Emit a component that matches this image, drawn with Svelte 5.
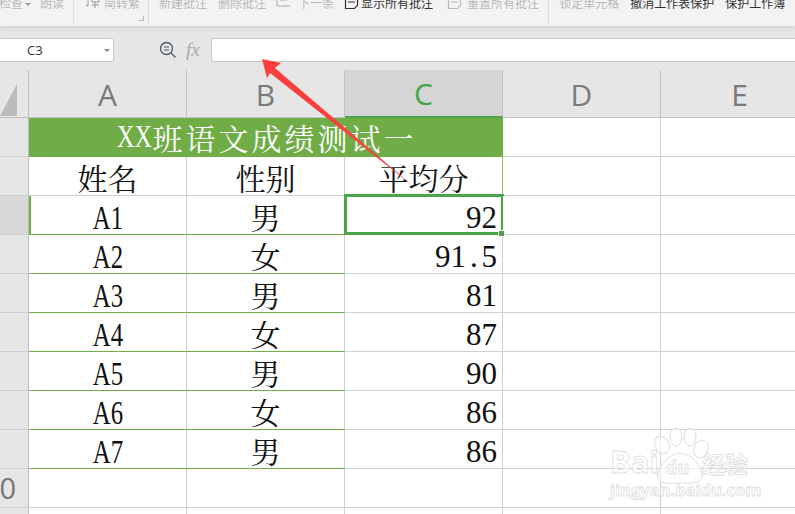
<script lang="ts">
  // spreadsheet screenshot: ribbon stub, formula bar, grade table
  const columns = ['A', 'B', 'C', 'D', 'E'];
  const students = [
    { name: 'A1', sex: '男', score: '92' },
    { name: 'A2', sex: '女', score: '91.5' },
    { name: 'A3', sex: '男', score: '81' },
    { name: 'A4', sex: '女', score: '87' },
    { name: 'A5', sex: '男', score: '90' },
    { name: 'A6', sex: '女', score: '86' },
    { name: 'A7', sex: '男', score: '86' }
  ];
</script>

<div class="page">
  <div class="ribbon">
    <div class="tools">
      <span class="tool off check">检查<i class="caret"></i></span>
      <span class="tool off read">朗读</span>
      <span class="sep one"></span>
      <svg class="ico fan" width="16" height="12" viewBox="0 0 16 12"><path d="M3 2v7l-2-1M7 0h7v5H7zM7 8h7M10 5v6" fill="none" stroke="#999"/></svg>
      <span class="tool off conv">简转繁</span>
      <span class="launcher"></span>
      <span class="sep two"></span>
      <span class="tool off new">新建批注</span>
      <span class="tool off del">删除批注</span>
      <svg class="ico next" width="15" height="12" viewBox="0 0 15 12"><path d="M1 0v9h13M4 3h7" fill="none" stroke="#aaa"/></svg>
      <span class="tool off nxt">下一条</span>
      <svg class="ico show" width="15" height="14" viewBox="0 0 15 14"><path d="M1.500 0v12.500h9l3-3V0M4 3h7M4 6h7" fill="none" stroke="#333" stroke-width="1.200"/></svg>
      <span class="tool on shw">显示所有批注</span>
      <svg class="ico reset" width="15" height="14" viewBox="0 0 15 14"><path d="M1.500 0v12.500h9l3-3V0M4 3h7M4 6h7" fill="none" stroke="#bbb" stroke-width="1.200"/></svg>
      <span class="tool off rst">重置所有批注</span>
      <span class="sep three"></span>
      <span class="tool off lock">锁定单元格</span>
      <span class="tool on undo">撤消工作表保护</span>
      <span class="tool on book">保护工作簿</span>
    </div>
  </div>

  <div class="formula-bar">
    <div class="name-box">
      <span>C3</span>
      <i class="drop"></i>
    </div>
    <svg class="lens" width="18" height="18" viewBox="0 0 18 18">
      <circle cx="7.500" cy="7.500" r="6" fill="none" stroke="#4c5a66" stroke-width="1.300"/>
      <path d="M12 12l4.500 4.500" stroke="#4c5a66" stroke-width="1.300"/>
      <path d="M5 6h5M5 9h5" stroke="#4c5a66" stroke-width="1.200"/>
    </svg>
    <span class="fx">fx</span>
    <div class="formula-input"></div>
  </div>

  <div class="sheet">
    <div class="corner"><i></i></div>
    {#each columns as col}
      <div class="col-head" class:current={col === 'C'}>{col}</div>
    {/each}

    <!-- row 1 -->
    <div class="row-head"></div>
    <div class="title"><span class="latin xx">XX</span>班语文成绩测试一</div>
    <div class="cell"></div>
    <div class="cell last"></div>

    <!-- row 2 -->
    <div class="row-head"></div>
    <div class="cell data">姓名</div>
    <div class="cell data">性别</div>
    <div class="cell data tinted">平均分</div>
    <div class="cell"></div>
    <div class="cell last"></div>

    {#each students as s, i}
      <div class="row-head" class:current={i === 0}></div>
      <div class="cell data ruled" class:first-row={i === 0}><span class="latin name">{s.name}</span></div>
      <div class="cell data ruled">{s.sex}</div>
      <div class="cell data score" class:active={i === 0}>
        <!-- half-width digits, each in its own slot -->
        {#each s.score as ch}<span class="latin digit">{ch}</span>{/each}
        {#if i === 0}<i class="handle"></i>{/if}
      </div>
      <div class="cell"></div>
      <div class="cell last"></div>
    {/each}

    <div class="row-head clipped"><span>10</span></div>
    <div class="cell"></div>
    <div class="cell"></div>
    <div class="cell"></div>
    <div class="cell"></div>
    <div class="cell last"></div>

    <div class="row-head"></div>
    <div class="cell"></div>
    <div class="cell"></div>
    <div class="cell"></div>
    <div class="cell"></div>
    <div class="cell last"></div>
  </div>

  <svg class="arrow" width="795" height="514" viewBox="0 0 795 514">
    <polygon points="262,59 281,63 275,68 413,186 270,73 267,78" fill="#fb3f3f"/>
  </svg>

  <svg class="mark" width="160" height="80" viewBox="0 0 160 80">
    <g fill="#fff" fill-opacity="0.6" stroke="#dedede" stroke-width="1">
      <ellipse cx="54" cy="18" rx="7" ry="9" transform="rotate(-30 54 18)"/>
      <ellipse cx="68" cy="10" rx="6" ry="9"/>
      <ellipse cx="82" cy="10" rx="6" ry="9"/>
      <ellipse cx="93" cy="22" rx="7" ry="9" transform="rotate(25 93 22)"/>
      <path d="M72 26c10 0 24 14 22 24-2 7-12 6-22 6s-20 2-22-5c-2-10 12-25 22-25z"/>
    </g>
    <g class="mark-text">
      <text x="2" y="46" font-size="31">Bai</text>
      <text x="58" y="47" font-size="18">du</text>
      <text x="94" y="46" font-size="23">经验</text>
      <text x="2" y="69" font-size="16.500">jingyan.baidu.com</text>
    </g>
  </svg>
</div>

<style>
  :global(body) {
    margin: 0;
  }

  .page {
    position: relative;
    width: 795px;
    height: 514px;
    overflow: hidden;
    background: #e6e6e6;
    font-family: "Noto Serif CJK SC", "Noto Sans CJK SC", sans-serif;
  }

  .ribbon {
    height: 26px;
    background: #f3f3f3;
    box-shadow: 0 2px 5px rgba(0, 0, 0, 0.09);
    overflow: hidden;
  }

  .tools {
    position: relative;
    display: flex;
    align-items: center;
    height: 12px;
    margin-top: -3px;
    font-family: "Noto Sans CJK SC", sans-serif;
    font-size: 12px;
    line-height: 12px;
    white-space: nowrap;
  }

  .tool {
    flex: none;
  }

  .tool.off {
    color: #b9b9b9;
  }

  .tool.on {
    color: #333;
  }

  .check { margin-left: -1px; }
  .caret {
    display: inline-block;
    margin-left: 2px;
    vertical-align: 2px;
    border: 3px solid transparent;
    border-top: 3px solid #999;
    border-bottom: 0;
  }
  .read { margin-left: 9px; }
  .fan { margin-left: 21px; }
  .conv { margin-left: 3px; }
  .new { margin-left: 19px; }
  .del { margin-left: 11px; }
  .next { margin-left: 10px; }
  .nxt { margin-left: 7px; }
  .show { margin-left: 10px; }
  .shw { margin-left: 2px; }
  .reset { margin-left: 14px; }
  .rst { margin-left: 5px; }
  .lock { margin-left: 20px; }
  .undo { margin-left: 11px; }
  .book { margin-left: 11px; }
  .ico { flex: none; }

  .sep {
    position: absolute;
    top: 0;
    width: 1px;
    height: 27px;
    background: #dcdcdc;
  }
  .sep.one { left: 73px; }
  .sep.two { left: 148px; }
  .sep.three { left: 548px; }

  .launcher {
    position: absolute;
    left: 139px;
    top: 19px;
    width: 4px;
    height: 4px;
    border-right: 1px solid #bbb;
    border-bottom: 1px solid #bbb;
  }

  .formula-bar {
    display: flex;
    align-items: center;
    height: 24px;
    margin-top: 12px;
    margin-bottom: 8px;
  }

  .name-box {
    position: relative;
    box-sizing: border-box;
    flex: none;
    display: flex;
    align-items: center;
    width: 116px;
    height: 24px;
    margin-left: -2px;
    padding-left: 28px;
    background: #fff;
    border: 1px solid #c8c8c8;
    border-radius: 3px;
    font-family: "Open Sans", sans-serif;
    font-size: 13px;
    color: #333;
  }

  .drop {
    position: absolute;
    right: 3px;
    top: 10px;
    border: 3px solid transparent;
    border-top: 3px solid #888;
    border-bottom: 0;
  }

  .lens {
    margin-left: 45px;
    flex: none;
  }

  .fx {
    flex: none;
    margin-left: 9px;
    font-family: "Liberation Serif", serif;
    font-style: italic;
    font-size: 19px;
    color: #aaa;
  }

  .formula-input {
    box-sizing: border-box;
    flex: none;
    width: 600px;
    height: 24px;
    margin-left: 11px;
    background: #fff;
    border: 1px solid #c8c8c8;
    border-radius: 3px;
  }

  .sheet {
    display: grid;
    grid-template-columns: 29px repeat(5, 158px);
    grid-template-rows: 48px repeat(11, 39px);
  }

  .corner {
    display: flex;
    align-items: flex-end;
    border-right: 1px solid #bdbdbd;
    box-sizing: border-box;
    border-bottom: 1px solid #bdbdbd;
  }

  .corner i {
    width: 0;
    height: 0;
    margin-bottom: 1px;
    border-style: solid;
    border-width: 0 0 32px 17px;
    border-color: transparent transparent #bcbcbc transparent;
  }

  .col-head {
    box-sizing: border-box;
    display: flex;
    align-items: center;
    justify-content: center;
    padding-top: 1px;
    border-right: 1px solid #c4c4c4;
    border-bottom: 1px solid #c4c4c4;
    font-family: "Open Sans", sans-serif;
    font-size: 30px;
    color: #7a7a7a;
  }

  .col-head.current {
    background: #d5d5d5;
    border-bottom: 2px solid #4aa54a;
    color: #3fa648;
  }

  .row-head {
    box-sizing: border-box;
    background: #e6e6e6;
    border-right: 1px solid #bdbdbd;
    border-bottom: 1px solid #cfcfcf;
  }

  .row-head.current {
    background: #d8d8d8;
  }

  .row-head.clipped {
    overflow: hidden;
    font-family: "Open Sans", sans-serif;
    font-size: 29px;
    line-height: 37px;
    color: #777;
  }

  .row-head.clipped span {
    display: block;
    margin-left: -17px;
  }

  .title {
    grid-column: span 3;
    box-sizing: border-box;
    display: flex;
    align-items: center;
    justify-content: center;
    padding-right: 1px;
    background: #70ad47;
    border-bottom: 1px solid #70ad47;
    font-size: 30px;
    line-height: 32px;
    letter-spacing: 3px;
    color: #fff;
  }

  .cell {
    box-sizing: border-box;
    position: relative;
    display: flex;
    align-items: center;
    justify-content: center;
    background: #fff;
    border-right: 1px solid #d0d0d0;
    border-bottom: 1px solid #d0d0d0;
  }

  .cell.last {
    border-right: 0;
  }

  .data {
    padding-top: 2px;
    font-size: 30px;
    line-height: 32px;
    color: #111;
  }

  .data .latin {
    margin-top: 3px;
  }

  .tinted {
    border-right-color: #8fbf6f;
  }

  .ruled {
    border-bottom-color: #70ad47;
  }

  .first-row {
    box-shadow: inset 2px 0 0 #70ad47;
  }

  .score {
    justify-content: flex-end;
    padding-right: 5px;
  }

  .latin {
    display: inline-block;
    font-family: "Liberation Serif", serif;
    font-size: 31px;
    letter-spacing: 0;
  }

  .digit {
    width: 15.5px;
    text-align: center;
  }

  .name {
    transform: scale(0.8, 1.1);
  }

  .xx {
    margin: 0 -4px 0 -3px;
    transform: scaleX(0.78);
  }

  .active::after {
    content: "";
    position: absolute;
    left: -1px;
    top: -2px;
    right: -2px;
    bottom: -1px;
    border: 3px solid #4aa54a;
    pointer-events: none;
  }

  .handle {
    position: absolute;
    z-index: 1;
    right: -3px;
    bottom: -3px;
    width: 5px;
    height: 5px;
    background: #4aa54a;
    border: 1px solid #fff;
  }

  .arrow {
    position: absolute;
    top: 0;
    left: 0;
    pointer-events: none;
  }

  .mark {
    position: absolute;
    left: 608px;
    top: 427px;
    pointer-events: none;
  }

  .mark-text {
    font-family: "Open Sans", "Noto Sans CJK SC", sans-serif;
    font-weight: 700;
    fill: #fff;
    fill-opacity: 0.6;
    stroke: #dedede;
    stroke-width: 0.8;
  }
</style>
